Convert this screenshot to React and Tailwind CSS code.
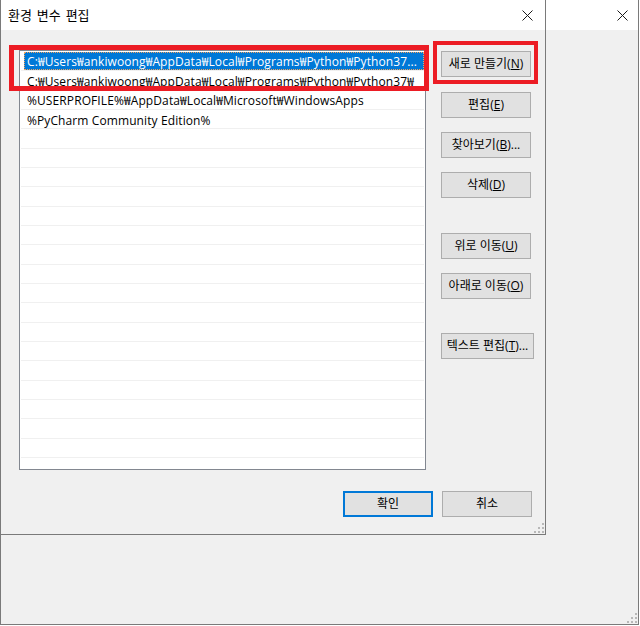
const paths = [
  'C:₩Users₩ankiwoong₩AppData₩Local₩Programs₩Python₩Python37...',
  'C:₩Users₩ankiwoong₩AppData₩Local₩Programs₩Python₩Python37₩',
  '%USERPROFILE%₩AppData₩Local₩Microsoft₩WindowsApps',
  '%PyCharm Community Edition%',
];

function CloseIcon() {
  return (
    <svg width="11" height="11" viewBox="0 0 11 11">
      <path d="M0.5 0.5L10.5 10.5M10.5 0.5L0.5 10.5" stroke="#1a1a1a" strokeWidth="1" />
    </svg>
  );
}

function Grip() {
  return (
    <svg width="10" height="10" viewBox="0 0 10 10" fill="#b8b8b8">
      <rect x="8" y="0" width="2" height="2" />
      <rect x="4" y="4" width="2" height="2" />
      <rect x="8" y="4" width="2" height="2" />
      <rect x="0" y="8" width="2" height="2" />
      <rect x="4" y="8" width="2" height="2" />
      <rect x="8" y="8" width="2" height="2" />
    </svg>
  );
}

function Btn({ label, keyChar, tail = '', className = '', wide = false, primary = false }) {
  return (
    <button
      className={`h-[26px] ${wide ? 'w-[93px]' : 'w-[90px]'} flex items-center justify-center bg-[#e1e1e1] text-[12px] text-black ${
        primary ? 'border-2 border-[#0078d7]' : 'border border-[#adadad]'
      } ${className}`}
    >
      {label}
      {keyChar && (
        <span>
          (<u>{keyChar}</u>)
        </span>
      )}
      {tail}
    </button>
  );
}

export default function App() {
  const rows = Array.from({ length: 21 }, (_, i) => paths[i] || '');

  return (
    <div className="relative w-[640px] h-[626px] bg-white overflow-hidden font-['Open_Sans','Noto_Sans_CJK_KR',sans-serif] text-black">
      {/* window behind */}
      <div className="relative w-[639px] h-[625px] border-x border-b border-[#7a7a7a] bg-[#f0f0f0] flex flex-col">
        <div className="h-[30px] bg-white flex items-center justify-end pr-[10px]">
          <CloseIcon />
        </div>
        <div className="absolute right-[1px] bottom-[1px]">
          <Grip />
        </div>
      </div>

      {/* dialog */}
      <div className="absolute left-0 top-0 w-[546px] h-[535px] border-x border-b border-[#7a7a7a] bg-[#f0f0f0] flex flex-col">
        <div className="h-[30px] shrink-0 bg-white flex items-center justify-between pl-[7px] pr-[12px]">
          <span className="text-[13px] font-['Noto_Sans_CJK_KR',sans-serif] [word-spacing:2px]">환경 변수 편집</span>
          <CloseIcon />
        </div>

        <div className="pl-[18px] pt-[20px]">
          <div className="flex items-start">
            {/* list */}
            <div className="w-[407px] h-[420px] border border-[#828790] bg-white pt-px overflow-hidden">
              {rows.map((text, i) => (
                <div key={i} className="h-[19.33px] ml-px mr-px border-b border-[#f0f0f0] flex">
                  {i === 0 ? (
                    <div className="ml-[3px] flex-1 bg-[#0078d7] text-white border border-dotted border-[#f3a35a] flex items-center pl-[2px] pt-[2px] text-[12px] tracking-[0.1px] whitespace-nowrap overflow-hidden">
                      {text}
                    </div>
                  ) : (
                    <div className="ml-[3px] flex-1 flex items-center pl-[3px] pt-[3px] text-[12px] tracking-[0.1px] whitespace-nowrap overflow-hidden">
                      {text}
                    </div>
                  )}
                </div>
              ))}
            </div>

            {/* side buttons */}
            <div className="ml-[15px] mt-px flex flex-col">
              <Btn label="새로 만들기" keyChar="N" />
              <Btn label="편집" keyChar="E" className="mt-[15px]" />
              <Btn label="찾아보기" keyChar="B" tail="..." className="mt-[14px]" />
              <Btn label="삭제" keyChar="D" className="mt-[14px]" />
              <Btn label="위로 이동" keyChar="U" className="mt-[35px]" />
              <Btn label="아래로 이동" keyChar="O" className="mt-[14px]" />
              <Btn label="텍스트 편집" keyChar="T" tail="..." wide className="mt-[34px]" />
            </div>
          </div>

          <div className="mt-[21px] ml-[324px] flex gap-[9px]">
            <Btn label="확인" primary />
            <Btn label="취소" />
          </div>
        </div>

        <div className="absolute right-[1px] bottom-[1px]">
          <Grip />
        </div>
      </div>

      {/* red annotation boxes */}
      <div className="absolute left-[9px] top-[45px] w-[420px] h-[46px] border-[5px] border-[#ec1c24]" />
      <div className="absolute left-[433px] top-[41px] w-[105px] h-[43px] border-[4px] border-[#ec1c24]" />
    </div>
  );
}
